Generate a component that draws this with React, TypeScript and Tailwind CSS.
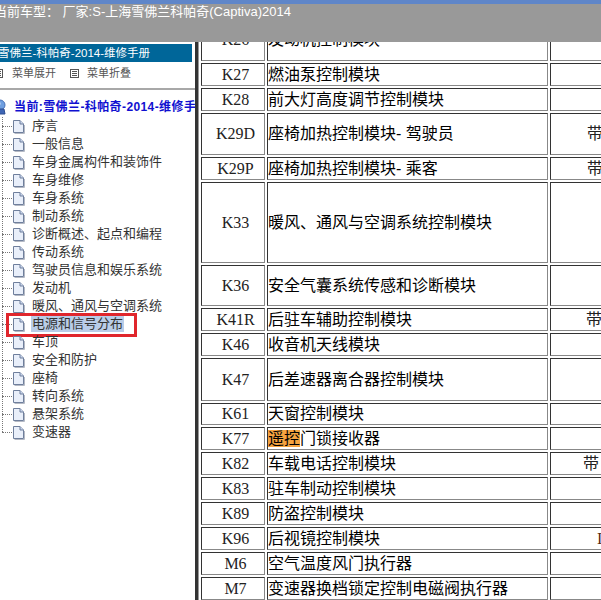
import React from 'react';

const CJK = "font-['Liberation_Sans','Noto_Sans_CJK_SC',sans-serif]";

const menu = [
  '序言', '一般信息', '车身金属构件和装饰件', '车身维修', '车身系统', '制动系统',
  '诊断概述、起点和编程', '传动系统', '驾驶员信息和娱乐系统', '发动机', '暖风、通风与空调系统',
  '电源和信号分布', '车顶', '安全和防护', '座椅', '转向系统', '悬架系统', '变速器',
];

const rows: { code: string; name: React.ReactNode; h: string; extra?: string; pad?: string }[] = [
  { code: 'K26', name: '发动机控制模块', h: 'h-[43px]' },
  { code: 'K27', name: '燃油泵控制模块', h: 'h-[23px]' },
  { code: 'K28', name: '前大灯高度调节控制模块', h: 'h-[23px]' },
  { code: 'K29D', name: '座椅加热控制模块- 驾驶员', h: 'h-[42px]', extra: '带', pad: 'pl-[36px]' },
  { code: 'K29P', name: '座椅加热控制模块- 乘客', h: 'h-[23px]', extra: '带', pad: 'pl-[36px]' },
  { code: 'K33', name: '暖风、通风与空调系统控制模块', h: 'h-[81px]' },
  { code: 'K36', name: '安全气囊系统传感和诊断模块', h: 'h-[41px]' },
  { code: 'K41R', name: '后驻车辅助控制模块', h: 'h-[23px]', extra: '带', pad: 'pl-[35px]' },
  { code: 'K46', name: '收音机天线模块', h: 'h-[23px]' },
  { code: 'K47', name: '后差速器离合器控制模块', h: 'h-[43px]' },
  { code: 'K61', name: '天窗控制模块', h: 'h-[22px]' },
  { code: 'K77', name: <><span className="bg-[#f5a340]">遥控</span>门锁接收器</>, h: 'h-[23px]' },
  { code: 'K82', name: '车载电话控制模块', h: 'h-[23px]', extra: '带', pad: 'pl-[32px]' },
  { code: 'K83', name: '驻车制动控制模块', h: 'h-[23px]' },
  { code: 'K89', name: '防盗控制模块', h: 'h-[23px]' },
  { code: 'K96', name: '后视镜控制模块', h: 'h-[23px]', extra: 'I', pad: "pl-[46px] font-['Liberation_Serif'] text-[#5a2a10]" },
  { code: 'M6', name: '空气温度风门执行器', h: 'h-[23px]' },
  { code: 'M7', name: '变速器换档锁定控制电磁阀执行器', h: 'h-[23px]' },
];

const cell = 'border border-t-[#333] border-l-[#333] border-r-[#888] border-b-[#888] p-0';

const PageIcon = () => (
  <svg width="13" height="15" viewBox="0 0 13 15" className="shrink-0">
    <path d="M1.5 1.5 H8 L11.5 5 V13.5 H1.5 Z" fill="#e9effa" stroke="#6f7f9c" />
    <path d="M8 1.5 V5 H11.5" fill="#c9d6ee" stroke="#6f7f9c" />
    <path d="M2.5 14.5 H12.5 V6" stroke="#b4b9c4" fill="none" />
  </svg>
);

const ListIcon = () => (
  <svg width="9" height="9" viewBox="0 0 9 9" className="shrink-0">
    <rect x="0.5" y="0.5" width="8" height="8" fill="#fff" stroke="#555" />
    <path d="M2 2.5 H7 M2 4.5 H7 M2 6.5 H7" stroke="#555" />
  </svg>
);

const RootIcon = () => (
  <svg width="17" height="17" viewBox="0 0 17 17" className="shrink-0">
    <circle cx="8" cy="6" r="5" fill="#6f9fe0" stroke="#4a72b8" />
    <circle cx="6.5" cy="4.5" r="2" fill="#d7e6fb" />
    <path d="M3 10 L12 10 L13 15 L4 15 Z" fill="#3f66b5" stroke="#2d4d91" />
  </svg>
);

const Row = ({ code, name, h, extra, pad }: (typeof rows)[number]) => (
  <tr className="text-[#222]">
    <td className={`${h} ${cell} pl-[5px] text-center font-['Liberation_Serif','Noto_Sans_CJK_SC',serif] text-[16px] leading-[20px]`}>{code}</td>
    <td className={`${cell} text-left text-[16px] leading-[20px] whitespace-nowrap text-black`}>{name}</td>
    <td className={`${cell} ${pad ?? ''} text-left text-[16px] leading-[20px]`}>{extra}</td>
  </tr>
);

export default function App() {
  return (
    <div className={`flex h-[600px] w-[601px] flex-col overflow-hidden bg-white ${CJK}`}>
      <div className="h-[42px] shrink-0 border-t-[4px] border-[#5f86c9] bg-[#999999]">
        <p className="-ml-[6px] whitespace-nowrap text-[13px] leading-[16px] text-white">
          当前车型：&nbsp;厂家:S-上海雪佛兰科帕奇(Captiva)2014
        </p>
      </div>

      <div className="flex min-h-0 flex-1">
        <aside className="flex w-[195px] shrink-0 flex-col overflow-hidden pt-[2px]">
          <div className="flex h-[18px] w-[192px] items-center bg-[#006699] pt-[1px] text-[11.5px] whitespace-nowrap text-white">
            <span className="-ml-[2px]">雪佛兰-科帕奇-2014-维修手册</span>
          </div>
          <div className="flex h-[28px] items-center border-b-2 border-[#a8a8a8] pb-[4px] text-[11px] text-[#555]">
            <div className="-ml-[6px] flex items-center gap-[9px]"><ListIcon /><span>菜单展开</span></div>
            <div className="ml-[14px] flex items-center gap-[8px]"><ListIcon /><span>菜单折叠</span></div>
          </div>
          <div className="mt-[8px] flex h-[18px] items-center whitespace-nowrap">
            <div className="-ml-[8px]"><RootIcon /></div>
            <span className="ml-[5px] text-[12px] font-bold tracking-[0.4px] text-[#1010d0]">当前:雪佛兰-科帕奇-2014-维修手册</span>
          </div>
          <ul className="relative mt-[1px] ml-[2px]">
            <span className="absolute top-0 bottom-[9px] left-0 border-l border-dotted border-[#777]" />
            {menu.map((m) => (
              <li key={m} className="relative flex h-[18px] items-center pl-[10px]">
                <span className="absolute top-[9px] left-0 w-[10px] border-t border-dotted border-[#777]" />
                <PageIcon />
                <span className={`ml-[6px] px-[1px] text-[13px] leading-[16px] whitespace-nowrap text-[#333] ${m === '电源和信号分布' ? 'bg-[#b9cde8]' : ''}`}>{m}</span>
                {m === '电源和信号分布' && (
                  <span className="absolute top-[-2px] left-[4px] h-[24px] w-[131px] border-[3px] border-[#e0262c]" />
                )}
              </li>
            ))}
          </ul>
        </aside>

        <div className="w-[3px] shrink-0 bg-[#333]" />
        <div className="w-[1px] shrink-0 bg-[#999]" />

        <main className="min-w-0 flex-1 overflow-hidden">
          <table className="-mt-[26px] w-[500px] table-fixed border-separate border-spacing-[2px]">
            <colgroup>
              <col className="w-[64px]" />
              <col className="w-[281px]" />
              <col />
            </colgroup>
            <tbody>
              {rows.map((r) => <Row key={r.code} {...r} />)}
            </tbody>
          </table>
        </main>
      </div>
    </div>
  );
}
